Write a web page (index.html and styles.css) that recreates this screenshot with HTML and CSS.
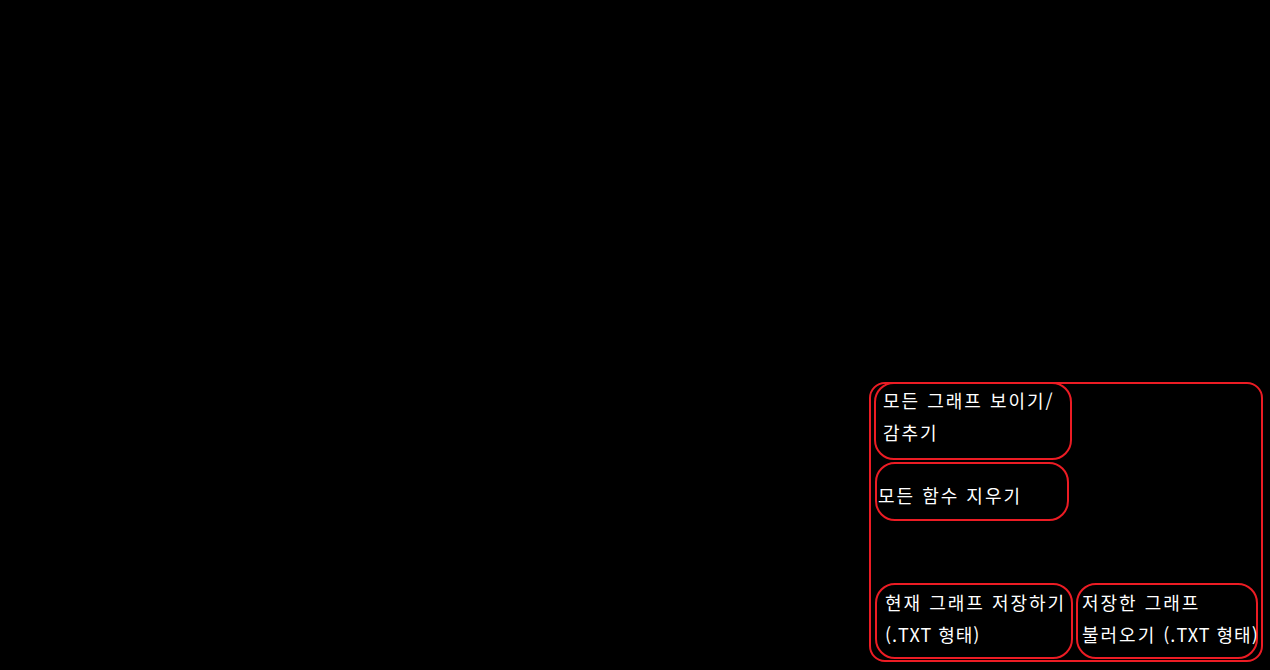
FILE: index.html
```html
<!DOCTYPE html>
<html lang="ko">
<head>
<meta charset="utf-8">
<link rel="stylesheet" href="styles.css">
</head>
<body>
<div class="stage">
  <div class="panel">
    <button class="btn btn-toggle">모든 그래프 보이기/<br>감추기</button>
    <button class="btn btn-clear">모든 함수 지우기</button>
    <div class="file-row">
      <button class="btn btn-save">현재 그래프 저장하기<br><span class="fmt">(.TXT 형태)</span></button>
      <button class="btn btn-load">저장한 그래프<br>불러오기 <span class="fmt">(.TXT 형태)</span></button>
    </div>
  </div>
</div>
</body>
</html>
```
FILE: styles.css
```css
html, body {
  margin: 0;
  padding: 0;
  background: #000;
  width: 1270px;
  height: 670px;
  overflow: hidden;
}
.stage {
  display: flex;
  justify-content: flex-end;
  align-items: flex-end;
  height: 670px;
  padding: 0 7px 8px 0;
  box-sizing: border-box;
}
.panel {
  width: 394px;
  height: 280px;
  box-sizing: border-box;
  border: 2px solid #ec1c24;
  border-radius: 16px;
  display: flex;
  flex-direction: column;
  align-items: flex-start;
  padding: 0 0 0 3px;
}
.btn {
  font-family: "Noto Sans CJK KR", "Noto Sans", sans-serif;
  font-size: 18px;
  line-height: 32px;
  letter-spacing: 2px;
  color: #fff;
  background: transparent;
  border: 2px solid #ec1c24;
  border-radius: 20px;
  text-align: left;
  box-sizing: border-box;
  margin: 0;
  cursor: pointer;
  white-space: nowrap;
}
.fmt {
  letter-spacing: 1px;
}
.btn-toggle {
  width: 198px;
  height: 78px;
  margin-top: -2px;
  padding: 0 0 10px 7px;
}
.btn-clear {
  width: 194px;
  height: 59px;
  margin-top: 2px;
  margin-left: 1px;
  padding: 6px 0 0 1px;
}
.file-row {
  margin-top: auto;
  margin-bottom: 1px;
  margin-left: 1px;
  display: flex;
  gap: 3px;
}
.btn-save {
  width: 198px;
  height: 76px;
  padding: 0 0 6px 8px;
}
.btn-load {
  width: 182px;
  height: 76px;
  padding: 0 0 6px 4px;
}
```
